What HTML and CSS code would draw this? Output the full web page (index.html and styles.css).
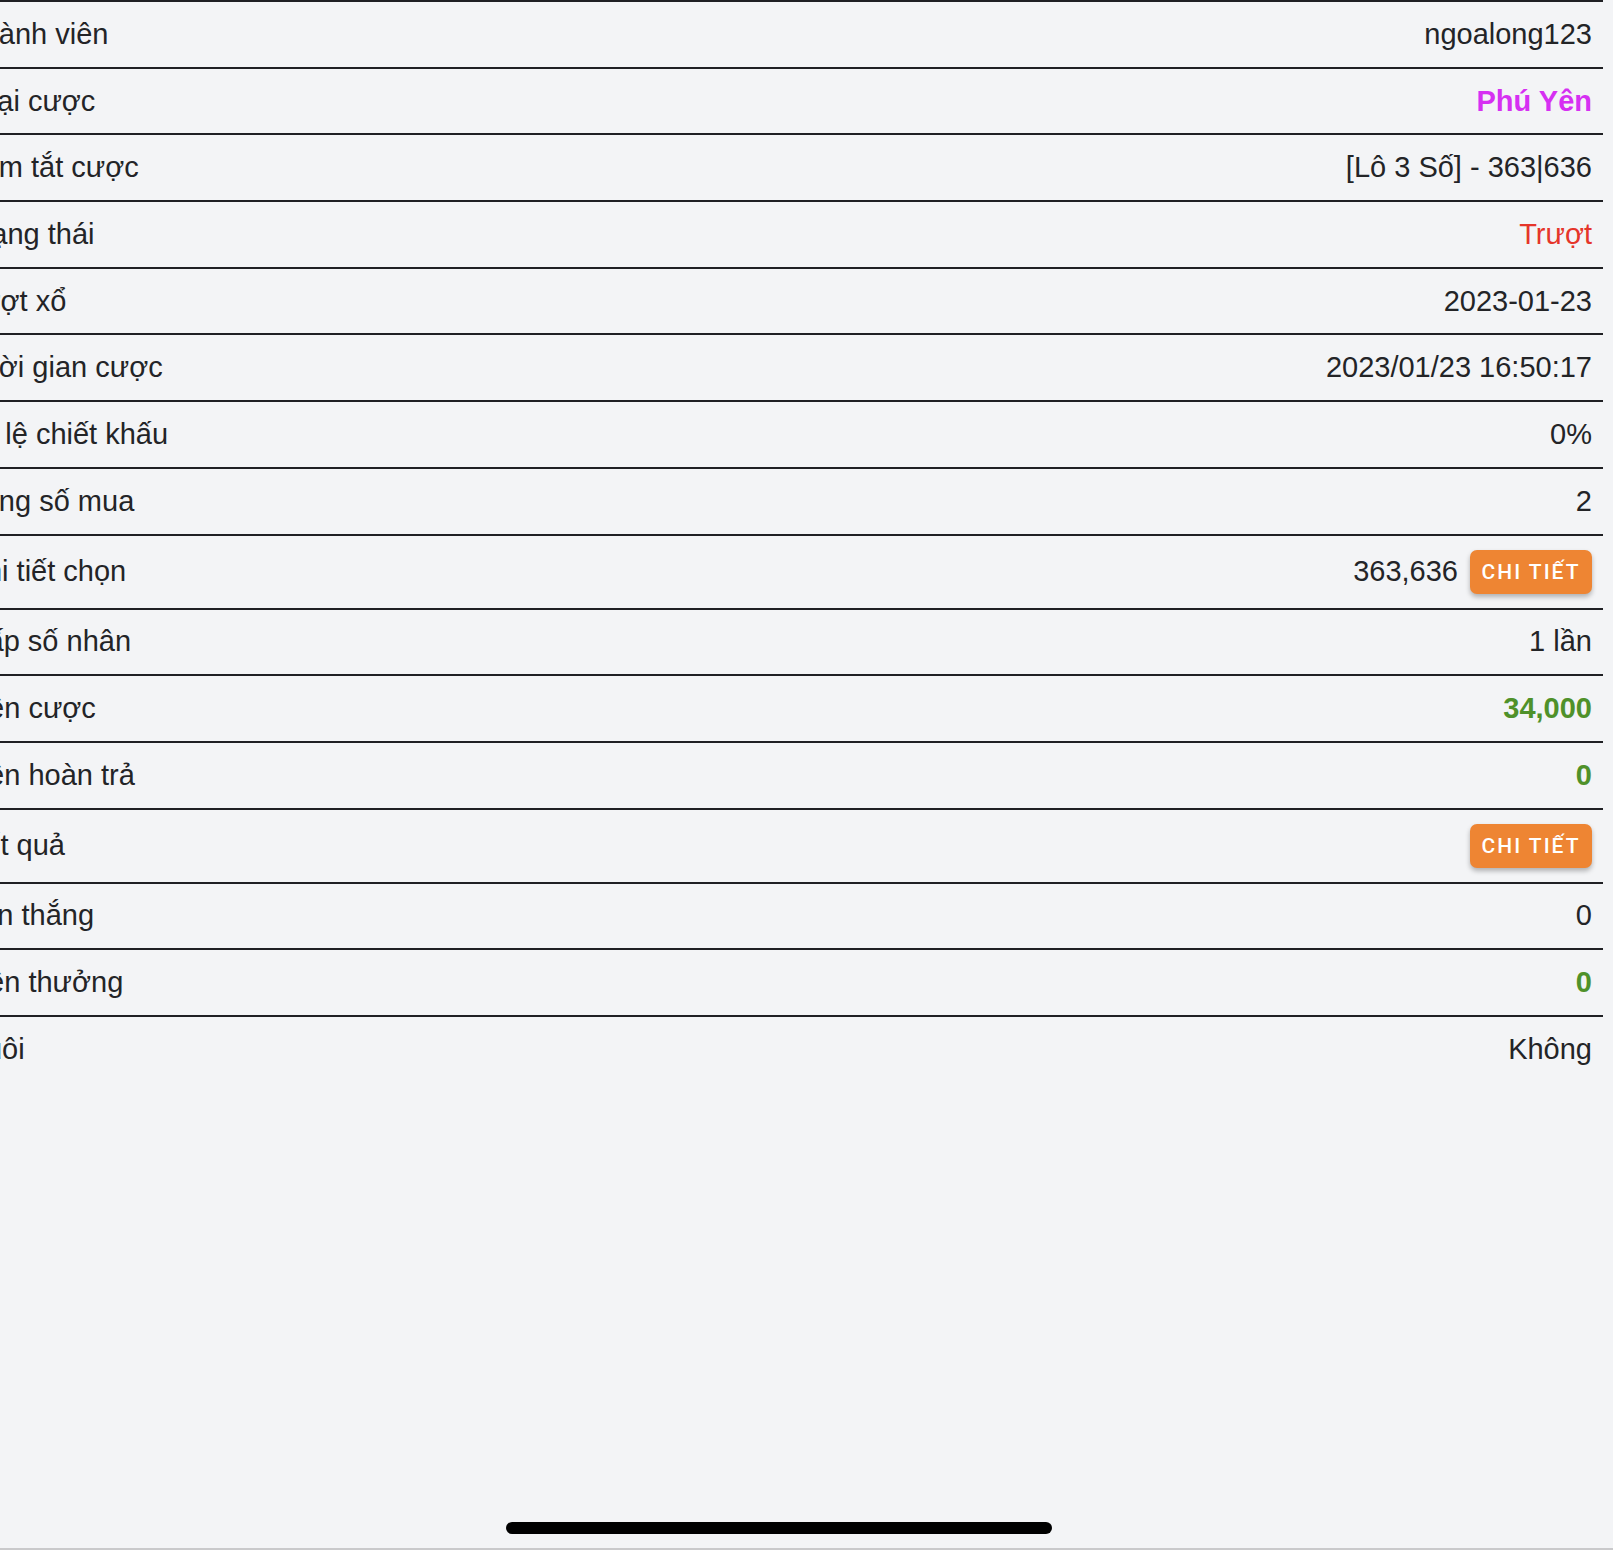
FILE: index.html
```html
<!DOCTYPE html>
<html lang="vi">
<head>
    <meta charset="UTF-8">
    <meta name="viewport" content="width=device-width, initial-scale=1.0">
    <title>Chi tiết cược</title>
    <link rel="stylesheet" href="styles.css">
</head>
<body>
    <div class="sheet">
        <div class="row">
            <span class="label">Thành viên</span>
            <span class="value">ngoalong123</span>
        </div>
        <div class="row">
            <span class="label">Loại cược</span>
            <span class="value pink">Phú Yên</span>
        </div>
        <div class="row">
            <span class="label">Tóm tắt cược</span>
            <span class="value">[Lô 3 Số] - 363|636</span>
        </div>
        <div class="row">
            <span class="label">Trạng thái</span>
            <span class="value red">Trượt</span>
        </div>
        <div class="row">
            <span class="label">Lượt xổ</span>
            <span class="value">2023-01-23</span>
        </div>
        <div class="row">
            <span class="label">Thời gian cược</span>
            <span class="value">2023/01/23 16:50:17</span>
        </div>
        <div class="row">
            <span class="label">Tỷ lệ chiết khấu</span>
            <span class="value">0%</span>
        </div>
        <div class="row">
            <span class="label">Tổng số mua</span>
            <span class="value">2</span>
        </div>
        <div class="row tall">
            <span class="label">Chi tiết chọn</span>
            <span class="value">363,636 <button type="button" class="detail-btn">Chi tiết</button></span>
        </div>
        <div class="row">
            <span class="label">Gấp số nhân</span>
            <span class="value">1 lần</span>
        </div>
        <div class="row">
            <span class="label">Tiền cược</span>
            <span class="value green">34,000</span>
        </div>
        <div class="row">
            <span class="label">Tiền hoàn trả</span>
            <span class="value green">0</span>
        </div>
        <div class="row tall">
            <span class="label">Kết quả</span>
            <span class="value"><button type="button" class="detail-btn">Chi tiết</button></span>
        </div>
        <div class="row">
            <span class="label">Lần thắng</span>
            <span class="value">0</span>
        </div>
        <div class="row">
            <span class="label">Tiền thưởng</span>
            <span class="value green">0</span>
        </div>
        <div class="row last">
            <span class="label">Nuôi</span>
            <span class="value">Không</span>
        </div>
    </div>
    <div class="home-bar"></div>
</body>
</html>
```

FILE: styles.css
```css
html, body {
    height: 100%;
}

body {
    margin: 0;
    background-color: #f3f4f6;
    font-family: "Liberation Sans", Arial, sans-serif;
    color: #232427;
    overflow: hidden;
    position: relative;
    border-bottom: 2px solid #c9c9cb;
    box-sizing: border-box;
}

.sheet {
    margin-left: -49px;
    margin-right: 10px;
}

.row {
    display: flex;
    align-items: center;
    justify-content: space-between;
    height: 66.7px;
    box-sizing: border-box;
    border-top: 2px solid #1f2024;
    padding: 0 11px 0 14px;
    font-size: 29px;
}

.row.tall {
    height: 74px;
}

.row.last {
    height: 68px;
}

.label {
    white-space: nowrap;
}

.value {
    display: flex;
    align-items: center;
    gap: 12px;
    white-space: nowrap;
}

.pink {
    color: #d630f2;
    font-weight: bold;
}

.red {
    color: #e5352a;
}

.green {
    color: #4f912a;
    font-weight: bold;
}

.detail-btn {
    width: 122px;
    height: 44px;
    padding: 0;
    border: none;
    border-radius: 7px;
    background-color: #ee8533;
    color: #fff;
    font-family: Roboto, "Liberation Sans", sans-serif;
    font-weight: 500;
    font-size: 21px;
    letter-spacing: 2px;
    text-transform: uppercase;
    box-shadow: 0 3px 5px rgba(0, 0, 0, 0.28);
    cursor: pointer;
}

.home-bar {
    position: absolute;
    left: 506px;
    bottom: 14px;
    width: 546px;
    height: 12px;
    border-radius: 6px;
    background-color: #000;
}
```
